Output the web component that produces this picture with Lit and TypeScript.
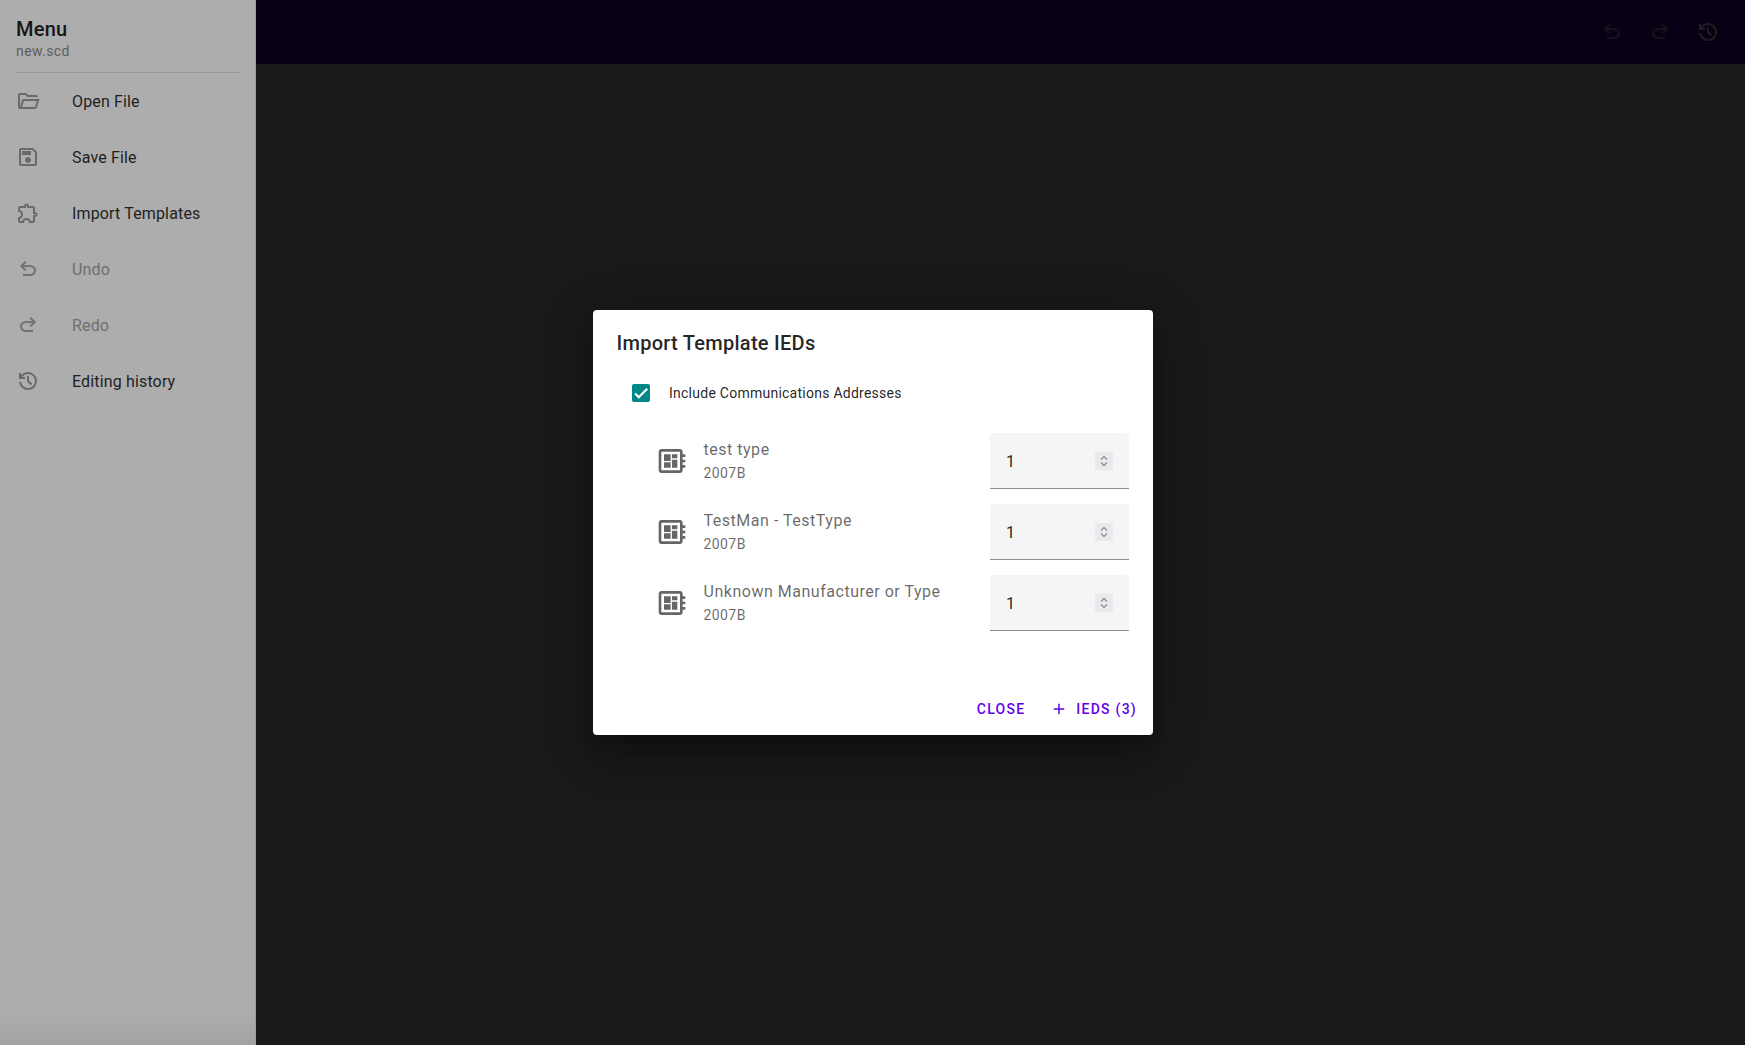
import { LitElement, css, html, svg } from 'lit';
import { customElement } from 'lit/decorators.js';

const icons = {
  open: svg`<path d="M4 20q-.825 0-1.412-.587Q2 18.825 2 18V6q0-.825.588-1.412Q3.175 4 4 4h6l2 2h8q.825 0 1.413.588Q22 7.175 22 8H11.175l-2-2H4v12l2.4-8h17.1l-2.575 8.575q-.2.65-.737 1.038Q19.25 20 18.6 20Zm2.1-2h12.9l1.8-6H7.9Z"/>`,
  save: svg`<path d="M17 3H5c-1.11 0-2 .9-2 2v14c0 1.1.89 2 2 2h14c1.1 0 2-.9 2-2V7l-4-4zm2 16H5V5h11.17L19 7.83V19zm-7-7c-1.66 0-3 1.34-3 3s1.34 3 3 3 3-1.34 3-3-1.34-3-3-3zM6 6h9v4H6z"/>`,
  extension: svg`<path d="M10.5 4.5c.28 0 .5.22.5.5v2h6v6h2c.28 0 .5.22.5.5s-.22.5-.5.5h-2v6h-2.12c-.68-1.75-2.39-3-4.38-3s-3.7 1.25-4.38 3H4v-2.12c1.75-.68 3-2.39 3-4.38 0-1.99-1.24-3.7-2.99-4.38L4 7h6V5c0-.28.22-.5.5-.5m0-2C9.12 2.5 8 3.62 8 5H4c-1.1 0-1.99.9-1.99 2v3.8h.29c1.49 0 2.7 1.21 2.7 2.7s-1.21 2.7-2.7 2.7H2V20c0 1.1.9 2 2 2h3.8v-.3c0-1.49 1.21-2.7 2.7-2.7s2.7 1.21 2.7 2.7v.3H17c1.1 0 2-.9 2-2v-4c1.38 0 2.5-1.12 2.5-2.5S20.38 11 19 11V7c0-1.1-.9-2-2-2h-4c0-1.38-1.12-2.5-2.5-2.5z"/>`,
  undo: svg`<path d="M7 19v-2h7.1q1.575 0 2.738-1Q18 15 18 13.5T16.838 11q-1.163-1-2.738-1H7.8l2.6 2.6L9 14 4 9l5-5 1.4 1.4L7.8 8h6.3q2.425 0 4.163 1.575Q20 11.15 20 13.5q0 2.35-1.737 3.925Q16.525 19 14.1 19Z"/>`,
  redo: svg`<path d="M9.9 19q-2.425 0-4.163-1.575Q4 15.85 4 13.5q0-2.35 1.737-3.925Q7.475 8 9.9 8h6.3l-2.6-2.6L15 4l5 5-5 5-1.4-1.4 2.6-2.6H9.9q-1.575 0-2.737 1Q6 12 6 13.5T7.163 16q1.162 1 2.737 1H17v2Z"/>`,
  history: svg`<path d="M12 21q-3.45 0-6.012-2.288Q3.425 16.425 3.05 13H5.1q.35 2.6 2.312 4.3Q9.375 19 12 19q2.925 0 4.962-2.038Q19 14.925 19 12t-2.038-4.963Q14.925 5 12 5q-1.725 0-3.225.8T6.25 8H9v2H3V4h2v2.35q1.275-1.6 3.113-2.475Q9.95 3 12 3q3.75 0 6.375 2.625T21 12q0 3.75-2.625 6.375T12 21Zm2.8-4.8L11 12.4V7h2v4.6l3.2 3.2Z"/>`,
  board: svg`<path d="M22 9V7h-2V5c0-1.1-.9-2-2-2H4c-1.1 0-2 .9-2 2v14c0 1.1.9 2 2 2h14c1.1 0 2-.9 2-2v-2h2v-2h-2v-2h2v-2h-2V9h2zm-4 10H4V5h14v14zM6 13h5v4H6v-4zm6-6h4v3h-4V7zM6 7h5v5H6V7zm6 4h4v6h-4v-6z"/>`,
  add: svg`<path d="M19 13h-6v6h-2v-6H5v-2h6V5h2v6h6v2z"/>`,
};

const menu = [
  { icon: icons.open, label: 'Open File' },
  { icon: icons.save, label: 'Save File' },
  { icon: icons.extension, label: 'Import Templates' },
  { icon: icons.undo, label: 'Undo', disabled: true },
  { icon: icons.redo, label: 'Redo', disabled: true },
  { icon: icons.history, label: 'Editing history' },
];

const templates = ['test type', 'TestMan - TestType', 'Unknown Manufacturer or Type'];

@customElement('app-root')
export class AppRoot extends LitElement {
  static override styles = css`
    :host {
      display: flex;
      position: relative;
      width: 100%;
      height: 100vh;
      overflow: hidden;
      background: #1a1a1a;
      font-family: Roboto, 'Liberation Sans', sans-serif;
    }
    svg {
      display: block;
      fill: currentColor;
    }
    .drawer {
      flex: none;
      box-sizing: border-box;
      width: 256px;
      background: linear-gradient(#adadad calc(100% - 30px), #a2a2a2);
      border-right: 1px solid #9c9c9c;
    }
    .drawer-head {
      box-sizing: border-box;
      width: 223px;
      height: 73px;
      margin: 0 16px;
      padding-top: 17px;
      border-bottom: 1px solid #979797;
    }
    .drawer-title {
      font-size: 20px;
      font-weight: 500;
      line-height: 24px;
      letter-spacing: 0.0125em;
      color: #161616;
    }
    .drawer-sub {
      padding-top: 1px;
      font-size: 14px;
      line-height: 18px;
      letter-spacing: 0.029em;
      color: #5e5e5e;
    }
    .menu-item {
      display: flex;
      align-items: center;
      height: 56px;
      padding-left: 16px;
      font-size: 16px;
      letter-spacing: 0.00937em;
      color: #1f1f1f;
    }
    .menu-item svg {
      width: 24px;
      height: 24px;
      margin-right: 32px;
      color: #6a6a6a;
    }
    .menu-item.disabled {
      color: #6f6f6f;
    }
    .menu-item.disabled svg {
      color: #727272;
    }
    .main {
      flex: 1;
      min-width: 0;
    }
    .bar {
      height: 64px;
      background: #0a0015;
      display: flex;
      align-items: center;
      justify-content: flex-end;
      padding-right: 25px;
      gap: 24px;
      color: #15131a;
    }
    .bar svg {
      width: 24px;
      height: 24px;
    }
    .bar svg:last-child {
      color: #1e1e1f;
    }
    .dialog {
      position: absolute;
      left: 593px;
      top: 310px;
      width: 560px;
      height: 425px;
      box-sizing: border-box;
      display: flex;
      flex-direction: column;
      background: #fff;
      border-radius: 4px;
      box-shadow: 0 11px 15px -7px rgba(0, 0, 0, 0.2), 0 24px 38px 3px rgba(0, 0, 0, 0.14),
        0 9px 46px 8px rgba(0, 0, 0, 0.12), 0 17px 70px 15px rgba(0, 0, 0, 0.06);
    }
    .dialog h2 {
      margin: 0;
      padding: 21px 24px 0 23.5px;
      font-size: 20px;
      font-weight: 500;
      line-height: 24px;
      letter-spacing: 0.0135em;
      color: rgba(0, 0, 0, 0.87);
    }
    .check {
      display: flex;
      align-items: center;
      margin: 28px 0 0 39px;
      font-size: 14px;
      line-height: 20px;
      letter-spacing: 0.0179em;
      color: rgba(0, 0, 0, 0.87);
    }
    .box {
      width: 18px;
      height: 18px;
      margin-right: 19px;
      border-radius: 2px;
      background: #018786;
      color: #fff;
    }
    .rows {
      display: flex;
      flex-direction: column;
      gap: 15px;
      margin: 30px 24px 0 63px;
    }
    .row {
      display: flex;
      align-items: center;
      height: 56px;
    }
    .row > svg {
      flex: none;
      width: 32px;
      height: 32px;
      margin-right: 15.5px;
      color: rgba(0, 0, 0, 0.6);
    }
    .row-text {
      flex: 1;
      min-width: 0;
      padding-bottom: 1px;
    }
    .primary {
      margin-bottom: 2px;
      font-size: 16px;
      line-height: 22px;
      letter-spacing: 0.0325em;
      color: rgba(0, 0, 0, 0.6);
    }
    .secondary {
      font-size: 14px;
      line-height: 20px;
      letter-spacing: 0.03em;
      color: rgba(0, 0, 0, 0.6);
    }
    .field {
      flex: none;
      position: relative;
      width: 139px;
      height: 56px;
    }
    input {
      display: block;
      box-sizing: border-box;
      width: 100%;
      height: 100%;
      padding: 2px 16px 0;
      border: 0;
      border-bottom: 1px solid rgba(0, 0, 0, 0.42);
      border-radius: 4px 4px 0 0;
      outline: none;
      background: #f5f5f5;
      font: 16px Roboto, 'Liberation Sans', sans-serif;
      letter-spacing: 0.00937em;
      color: rgba(0, 0, 0, 0.87);
    }
    input::-webkit-inner-spin-button {
      display: none;
    }
    .spin {
      position: absolute;
      top: 19px;
      right: 16px;
      width: 18px;
      height: 18px;
      background: #e9e9ee;
      color: #8f8f99;
    }
    .actions {
      display: flex;
      justify-content: flex-end;
      align-items: center;
      gap: 13px;
      margin-top: auto;
      padding: 8px;
    }
    .btn {
      display: flex;
      align-items: center;
      height: 36px;
      padding: 0 8px;
      font-size: 14px;
      font-weight: 500;
      letter-spacing: 0.0892857em;
      color: #6200ee;
    }
    .btn svg {
      width: 18px;
      height: 18px;
      margin: 0 8px 0 -4px;
    }
  `;

  override render() {
    return html`
      <aside class="drawer">
        <div class="drawer-head">
          <div class="drawer-title">Menu</div>
          <div class="drawer-sub">new.scd</div>
        </div>
        <div class="menu">
          ${menu.map(
            (m) => html`
              <div class="menu-item ${m.disabled ? 'disabled' : ''}">
                <svg viewBox="0 0 24 24">${m.icon}</svg>
                <span>${m.label}</span>
              </div>
            `
          )}
        </div>
      </aside>
      <div class="main">
        <div class="bar">
          <svg viewBox="0 0 24 24">${icons.undo}</svg>
          <svg viewBox="0 0 24 24">${icons.redo}</svg>
          <svg viewBox="0 0 24 24">${icons.history}</svg>
        </div>
      </div>
      <div class="dialog">
        <h2>Import Template IEDs</h2>
        <div class="check">
          <div class="box">
            <svg viewBox="0 0 24 24" width="18" height="18">
              <path d="M4.1 12.7 9 17.6 20.3 6.3" fill="none" stroke="currentColor" stroke-width="3" />
            </svg>
          </div>
          <span>Include Communications Addresses</span>
        </div>
        <div class="rows">
          ${templates.map(
            (t) => html`
              <div class="row">
                <svg viewBox="0 0 24 24">${icons.board}</svg>
                <div class="row-text">
                  <div class="primary">${t}</div>
                  <div class="secondary">2007B</div>
                </div>
                <div class="field">
                  <input type="number" value="1" min="0" />
                  <div class="spin">
                    <svg viewBox="0 0 18 18" width="18" height="18">
                      <path d="M6 7.5 9 4.5l3 3M6 10.5l3 3 3-3" fill="none" stroke="currentColor" stroke-width="1.3" />
                    </svg>
                  </div>
                </div>
              </div>
            `
          )}
        </div>
        <div class="actions">
          <div class="btn">CLOSE</div>
          <div class="btn"><svg viewBox="0 0 24 24">${icons.add}</svg>IEDS (3)</div>
        </div>
      </div>
    `;
  }
}
